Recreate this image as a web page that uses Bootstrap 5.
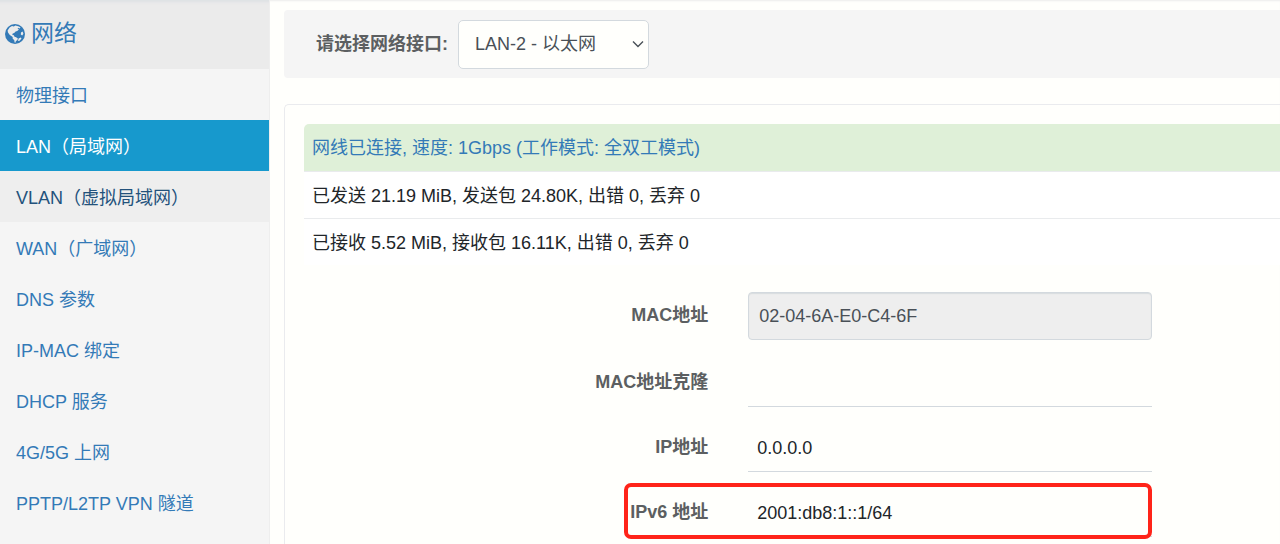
<!DOCTYPE html>
<html lang="zh-CN">
<head>
<meta charset="utf-8">
<meta name="viewport" content="width=device-width, initial-scale=1">
<title>网络 - LAN（局域网）</title>
<link href="https://cdn.jsdelivr.net/npm/bootstrap@5.3.0/dist/css/bootstrap.min.css" rel="stylesheet">
<style>
body { font: 18px/26px "Liberation Sans", "Noto Sans CJK SC", sans-serif; color: #212529; background: #fffffc; }
a { color: #337ab7; text-decoration: none; }
.layout { min-height: 100vh; overflow-x: hidden; box-shadow: inset 0 2px 2px -1px #ececec; }
.sidebar { width: 270px; background: #f5f5f5; border-right: 1px solid #eee; }
.side-head { height: 69px; padding: 0 5px 2px; gap: 6px; background: #ebebeb; color: #337ab7; font-size: 23px; font-weight: 400; box-shadow: inset 0 5px 3px -3px #dde1e4; }
.side-head svg { width: 20px; height: 20px; }
.sidebar .nav-link { padding: 14px 16px 11px; color: #337ab7; }
.sidebar .nav-link.hovered { background: #eee; color: #23527c; }
.sidebar .nav-link.active { background: #1799cd; color: #fff; }
.content { padding: 10px 0 0 14px; min-width: 0; }
.picker { height: 68px; padding: 0 32px; gap: 10px; background: #f5f5f5; border-radius: 4px 0 0 4px; }
.picker label, .field-label { font-weight: 700; color: #5c5f61; }
.picker .form-select { width: 191px; height: 49px; padding: 0 36px 0 16px; font-size: 18px; color: #495057; background-color: #fffffc; border: 1px solid #d3d9de; border-radius: 5px; background-position: right 3px center; background-size: 14px 14px;
  background-image: url("data:image/svg+xml,%3Csvg xmlns='http://www.w3.org/2000/svg' viewBox='0 0 14 14'%3E%3Cpath fill='none' stroke='%23495057' stroke-width='1.4' d='M2 4.5l5 5 5-5'/%3E%3C/svg%3E"); }
.panel { margin-top: 26px; padding: 19px 0 19px 19px; border: 1px solid #eaebee; border-right: 0; border-radius: 5px 0 0 0; }
.stats { margin-bottom: 27px; }
.stats td { height: 47px; padding: 2px 8px 0; vertical-align: middle; background: #fff; border-bottom: 1px solid #e9ebed; color: #212529; }
.stats tr:first-child td { background: #dff0d8; border-top-left-radius: 5px; }
.stats tr:last-child td { border-bottom: 0; }
.field { margin-left: -20px; margin-bottom: 17px; }
.field.first { margin-bottom: 19px; }
.field > div { width: 44.6%; padding: 0 20px; }
.field-label { line-height: 46px; text-align: right; }
.field .form-control { height: 48px; padding: 2px 9px 0; font-size: 18px; color: #212529; background: transparent; border: 0 solid #d3d9de; border-bottom-width: 1px; border-radius: 0; }
.field .form-control:disabled { padding: 1px 10px 0; background: #eee; color: #495057; border: 1px solid #d3d9de; border-radius: 4px; box-shadow: inset 0 1px 1px #d8dcde; }
.callout { position: absolute; top: -6px; bottom: -2px; left: -104px; right: 20px; border: 4px solid #ff2419; border-radius: 7px; pointer-events: none; }
</style>
</head>
<body>
<div class="layout d-flex">
  <aside class="sidebar flex-shrink-0">
    <h1 class="side-head d-flex align-items-center m-0">
      <svg viewBox="0 0 20 20" aria-hidden="true"><circle cx="10" cy="10" r="10" fill="#337ab7"/><path fill="#ebebeb" d="M2.6 6.4 4.6 3.6 7 2.1l1.8.5L10.4 1.6l3.6.8 1.6 1.4-1.4.6-1-.7-.6 1 1.4.7-1.8 1.5-1.6.6-1.4 1.6-1.5.5-.4 1.4 1.6.3.6 1.4 1.6.5 1.8 1.4-.6 1.6-1.4.9-.5 1.6-.8-.3-.3-2.2-1.7-1.6.1-1.5L4.8 11 3 8.6zM16 8.6l1.6-1 .8 2.2-1.2 1.6-1.4-.8zM13.6 14.4l2.2-.8.7.8-1.9 2.4-1.6.3z"/></svg>
      <span>网络</span>
    </h1>
    <nav class="nav flex-column">
      <a class="nav-link" href="#">物理接口</a>
      <a class="nav-link active" href="#" aria-current="page">LAN（局域网）</a>
      <a class="nav-link hovered" href="#">VLAN（虚拟局域网）</a>
      <a class="nav-link" href="#">WAN（广域网）</a>
      <a class="nav-link" href="#">DNS 参数</a>
      <a class="nav-link" href="#">IP-MAC 绑定</a>
      <a class="nav-link" href="#">DHCP 服务</a>
      <a class="nav-link" href="#">4G/5G 上网</a>
      <a class="nav-link" href="#">PPTP/L2TP VPN 隧道</a>
    </nav>
  </aside>
  <main class="content flex-grow-1">
    <form class="picker d-flex align-items-center">
      <label for="iface">请选择网络接口:</label>
      <select id="iface" class="form-select"><option>LAN-2 - 以太网</option></select>
    </form>
    <section class="panel">
      <table class="stats table">
        <tbody>
          <tr><td><a href="#">网线已连接, 速度: 1Gbps (工作模式: 全双工模式)</a></td></tr>
          <tr><td>已发送 21.19 MiB, 发送包 24.80K, 出错 0, 丢弃 0</td></tr>
          <tr><td>已接收 5.52 MiB, 接收包 16.11K, 出错 0, 丢弃 0</td></tr>
        </tbody>
      </table>
      <form>
        <div class="field first d-flex">
          <div class="text-end"><label class="field-label" for="mac">MAC地址</label></div>
          <div><input id="mac" class="form-control" value="02-04-6A-E0-C4-6F" disabled></div>
        </div>
        <div class="field d-flex">
          <div class="text-end"><label class="field-label" for="clone">MAC地址克隆</label></div>
          <div><input id="clone" class="form-control"></div>
        </div>
        <div class="field d-flex">
          <div class="text-end"><label class="field-label" for="ip">IP地址</label></div>
          <div><input id="ip" class="form-control" value="0.0.0.0"></div>
        </div>
        <div class="field d-flex mb-0">
          <div class="text-end"><label class="field-label" for="ipv6">IPv6 地址</label></div>
          <div class="position-relative"><input id="ipv6" class="form-control" value="2001:db8:1::1/64"><span class="callout"></span></div>
        </div>
      </form>
    </section>
  </main>
</div>
</body>
</html>
